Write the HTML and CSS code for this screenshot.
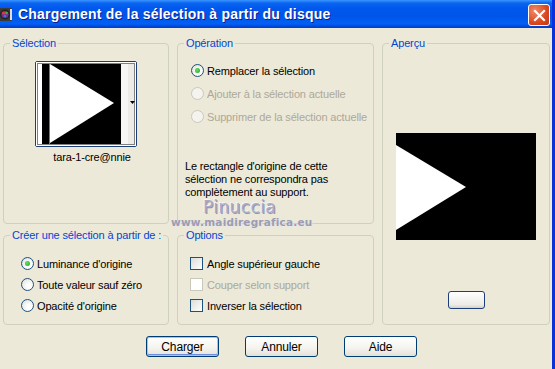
FILE: index.html
```html
<!DOCTYPE html>
<html>
<head>
  <meta charset="utf-8">
  <title>Chargement de la sélection à partir du disque</title>
  <link rel="stylesheet" href="styles.css">
</head>
<body>
<div class="window">
  <div class="titlebar">
    <svg class="app-icon" width="14" height="15" viewBox="0 0 14 15">
      <rect x="0" y="1" width="13" height="13" rx="1" fill="#3a3a3a"/>
      <circle cx="6" cy="7.5" r="5" fill="#222"/>
      <circle cx="6" cy="7.5" r="3.6" fill="#7a2d8f"/>
      <circle cx="4.5" cy="6" r="1.5" fill="#e23b3b"/>
      <circle cx="7.5" cy="6" r="1.3" fill="#3bb54a"/>
      <circle cx="6" cy="9" r="1.3" fill="#2b7de0"/>
      <rect x="11" y="2" width="2" height="11" fill="#dcdcdc"/>
    </svg>
    <span class="title">Chargement de la sélection à partir du disque</span>
    <div class="close-btn">
      <svg width="13" height="13" viewBox="0 0 13 13">
        <path d="M2 2 L11 11 M11 2 L2 11" stroke="#fff" stroke-width="2.2" stroke-linecap="square"/>
      </svg>
    </div>
  </div>

  <div class="content">
    <div class="groups">

      <div class="group g-selection">
        <span class="legend">Sélection</span>
        <div class="thumb-btn">
          <svg width="100" height="84" viewBox="0 0 100 84">
            <rect x="0" y="0" width="100" height="84" fill="#fff"/>
            <rect x="6" y="2" width="79" height="80" fill="#000"/>
            <rect x="13" y="2" width="1" height="80" fill="#777"/>
            <polygon points="14,2 78,41 14,81" fill="#fff"/>
            <rect x="85" y="2" width="7" height="80" fill="#f6f6f4"/>
            <rect x="92" y="2" width="6" height="80" fill="#ecebe6"/>
            <polygon points="94,39 99,39 96.5,42" fill="#000"/>
            <rect x="1.5" y="1.5" width="97" height="81" fill="none" stroke="#000" stroke-width="1" stroke-dasharray="1 1"/>
          </svg>
        </div>
        <div class="thumb-name">tara-1-cre@nnie</div>
      </div>

      <div class="group g-operation">
        <span class="legend">Opération</span>
        <div class="radio-list op-list">
          <div class="row"><span class="radio checked"></span>Remplacer la sélection</div>
          <div class="row disabled"><span class="radio"></span>Ajouter à la sélection actuelle</div>
          <div class="row disabled"><span class="radio"></span>Supprimer de la sélection actuelle</div>
        </div>
        <p class="note">Le rectangle d'origine de cette<br>sélection ne correspondra pas<br>complètement au support.</p>
      </div>

      <div class="group g-preview">
        <span class="legend">Aperçu</span>
        <svg class="preview" width="140" height="107" viewBox="0 0 140 107">
          <rect width="140" height="107" fill="#000"/>
          <polygon points="0,12 70,54 0,97" fill="#fff"/>
        </svg>
        <div class="small-btn"></div>
      </div>

      <div class="group g-create">
        <span class="legend">Créer une sélection à partir de :</span>
        <div class="radio-list create-list">
          <div class="row"><span class="radio checked"></span>Luminance d'origine</div>
          <div class="row"><span class="radio"></span>Toute valeur sauf zéro</div>
          <div class="row"><span class="radio"></span>Opacité d'origine</div>
        </div>
      </div>

      <div class="group g-options">
        <span class="legend">Options</span>
        <div class="radio-list opt-list">
          <div class="row"><span class="check"></span>Angle supérieur gauche</div>
          <div class="row disabled"><span class="check"></span>Couper selon support</div>
          <div class="row"><span class="check"></span>Inverser la sélection</div>
        </div>
      </div>

    </div>

    <div class="buttons">
      <div class="btn default">Charger</div>
      <div class="btn">Annuler</div>
      <div class="btn">Aide</div>
    </div>
  </div>

  <div class="wm-name">Pinuccia</div>
  <div class="wm-site">www.maidiregrafica.eu</div>
</div>
</body>
</html>
```

FILE: styles.css
```css
html, body {
  margin: 0;
  padding: 0;
}

body {
  width: 555px;
  height: 369px;
  overflow: hidden;
  background: #ece9d8;
  font-family: "Liberation Sans", Arial, sans-serif;
  font-size: 11px;
  letter-spacing: -0.15px;
  color: #000;
}

.window {
  position: relative;
  width: 552px;
  height: 369px;
  border-right: 3px solid #0831d9;
}

.titlebar {
  height: 28px;
  display: flex;
  align-items: center;
  background: linear-gradient(#3d95ff 0, #0a66f0 3px, #0058ee 8px, #0055e8 16px, #0260f5 24px, #0049d8 26px, #003ec8 28px);
}

.app-icon {
  margin-left: -1px;
  margin-top: 1px;
}

.title {
  margin-left: 5px;
  color: #fff;
  font-weight: bold;
  font-size: 14px;
  letter-spacing: 0.2px;
  text-shadow: 1px 1px 0 #0a1e8c;
  flex: 1;
}

.close-btn {
  width: 20px;
  height: 20px;
  margin-right: 2px;
  margin-top: 2px;
  border: 1px solid #fff;
  border-radius: 3px;
  background: radial-gradient(circle at 30% 30%, #f08a6a, #d9471f 60%, #c23a14);
  display: flex;
  align-items: center;
  justify-content: center;
}

.content {
  padding: 15px 0 0 3px;
}

.groups {
  display: grid;
  grid-template-columns: 166px 197px 168px;
  grid-template-rows: 181px 90px;
  column-gap: 8px;
  row-gap: 11px;
}

.group {
  position: relative;
  border: 1px solid #d0d0bf;
  border-radius: 4px;
}

.legend {
  position: absolute;
  top: -7px;
  left: 6px;
  padding: 0 2px;
  background: #ece9d8;
  color: #0046d5;
  line-height: 13px;
  white-space: nowrap;
}

/* Sélection */
.g-selection {
  display: flex;
  flex-direction: column;
  align-items: center;
}

.thumb-btn {
  margin-top: 17px;
  width: 100px;
  height: 84px;
  border: 1px solid #1c3f7a;
  border-radius: 2px;
  line-height: 0;
}

.thumb-name {
  margin-top: 4px;
  margin-left: 12px;
  line-height: 13px;
}

/* radios et cases */
.radio-list .row {
  display: flex;
  align-items: center;
  height: 13px;
  white-space: nowrap;
}

.radio-list .row.disabled {
  color: #aca899;
}

.radio {
  width: 11px;
  height: 11px;
  border: 1px solid #1c5180;
  border-radius: 50%;
  background: radial-gradient(circle at 65% 65%, #fff 20%, #dcdcd4 100%);
  margin-right: 3px;
  display: flex;
  align-items: center;
  justify-content: center;
  flex: none;
}

.radio.checked::after {
  content: "";
  width: 5px;
  height: 5px;
  border-radius: 50%;
  background: radial-gradient(circle at 40% 40%, #5fe35f, #21a121);
}

.row.disabled .radio {
  border-color: #cac8bb;
  background: #f4f3ee;
}

.check {
  width: 11px;
  height: 11px;
  border: 1px solid #1c5180;
  background: linear-gradient(135deg, #dcdcd7, #fff);
  margin-right: 3px;
  flex: none;
}

.row.disabled .check {
  border-color: #cac8bb;
  background: #fff;
}

.op-list {
  margin: 20px 0 0 13px;
  display: flex;
  flex-direction: column;
  gap: 10px;
}

.note {
  margin: 37px 0 0 7px;
  line-height: 13px;
}

.create-list {
  margin: 21px 0 0 17px;
  display: flex;
  flex-direction: column;
  gap: 8px;
}

.opt-list {
  margin: 21px 0 0 12px;
  display: flex;
  flex-direction: column;
  gap: 8px;
}

.opt-list .check {
  margin-right: 4px;
}

/* Aperçu */
.g-preview {
  grid-row: 1 / 3;
  grid-column: 3;
  display: flex;
  flex-direction: column;
  align-items: center;
}

.preview {
  margin-top: 89px;
}

.small-btn {
  margin-top: 51px;
  width: 35px;
  height: 16px;
  border: 1px solid #1c3f7a;
  border-radius: 3px;
  background: linear-gradient(#fff, #ecebe6 80%, #d6d0c5);
}

/* boutons */
.buttons {
  display: flex;
  gap: 26px;
  padding-left: 143px;
  margin-top: 11px;
}

.btn {
  width: 71px;
  height: 19px;
  border: 1px solid #003c74;
  border-radius: 3px;
  background: linear-gradient(#fff, #f4f3ee 60%, #e3e0d6);
  display: flex;
  align-items: center;
  justify-content: center;
  font-size: 12px;
}

.btn.default {
  box-shadow: inset 0 0 0 1px #a9c0f0, inset 0 -1px 0 1px #6f8ee0;
}

/* filigrane */
.wm-name {
  position: absolute;
  left: 203px;
  top: 200px;
  line-height: 14px;
  font-family: "DejaVu Sans", sans-serif;
  font-size: 17px;
  letter-spacing: 0.4px;
  color: #ababc9;
  text-shadow: -1px -1px 0 #f4f4f4, 1px 1px 0 #9494ac;
}

.wm-site {
  position: absolute;
  left: 171px;
  top: 216px;
  line-height: 12px;
  font-family: "DejaVu Sans", sans-serif;
  font-weight: bold;
  font-size: 10.5px;
  letter-spacing: 0.2px;
  color: #9c9cb4;
  text-shadow: 1px 1px 0 #e8e8e8;
}
```
